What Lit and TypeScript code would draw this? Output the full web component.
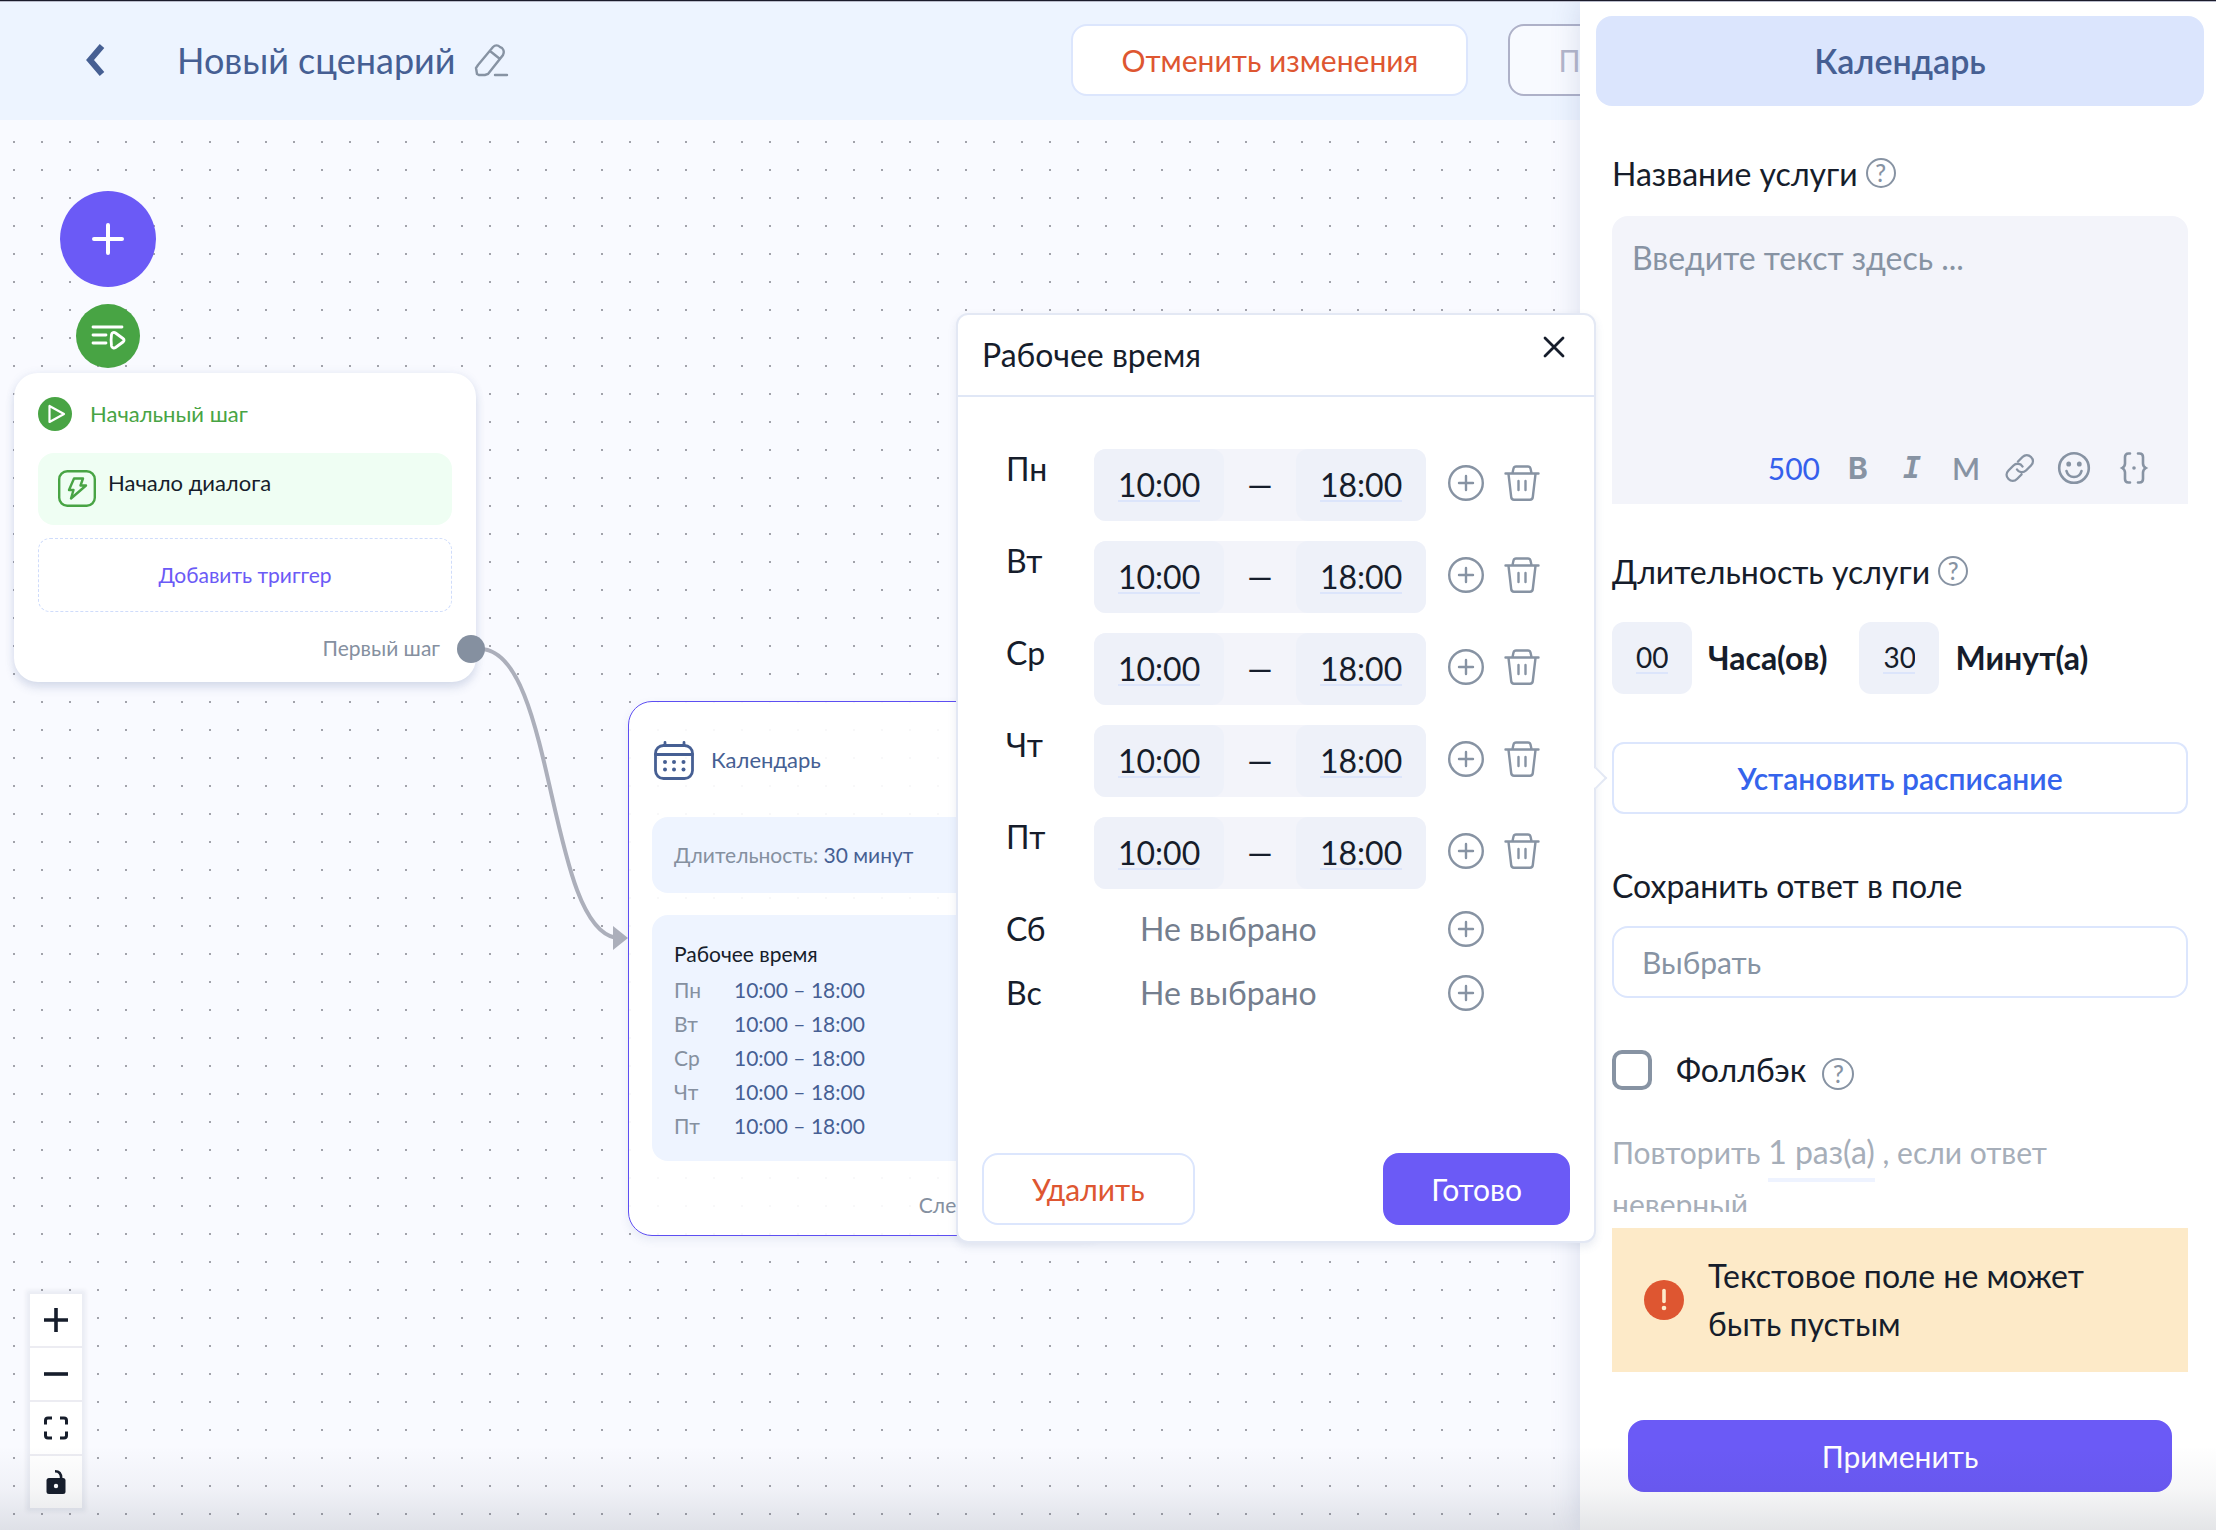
import { LitElement, html, css, svg, nothing } from "lit";
import { customElement, property } from "lit/decorators.js";

type Day = { name: string; from?: string; to?: string };

const DAYS: Day[] = [
  { name: "Пн", from: "10:00", to: "18:00" },
  { name: "Вт", from: "10:00", to: "18:00" },
  { name: "Ср", from: "10:00", to: "18:00" },
  { name: "Чт", from: "10:00", to: "18:00" },
  { name: "Пт", from: "10:00", to: "18:00" },
  { name: "Сб" },
  { name: "Вс" },
];

const icons = {
  back: svg`<path d="M18 3 6 17l12 14" stroke-width="6"/>`,
  pencil: svg`<path d="M3 21 18 3c2-2 5-2 7 0l2 1c2 2 2 5 1 7L13 30l-3 1H4l-2-1-1-6zM15 7l10 8M20 31h12" stroke-linecap="round"/>`,
  plus: svg`<path d="M16 2v28M2 16h28" stroke-width="4" stroke-linecap="round"/>`,
  list: svg`<path d="M2 5h29M2 13h13M2 21h13" stroke-linecap="round"/><path d="M20.500 12.500c.4-2 2.500-2.600 4-1.500l7.500 5.500c1.400 1 1.400 2.500 0 3.500L24.500 25.500c-1.500 1-3.600.5-4-1.500-.5-3.500-.5-8 0-11.500z" stroke-linejoin="round"/>`,
  play: svg`<circle cx="17" cy="17" r="17" fill="#48a444" stroke="none"/><path d="M11.500 9v16L26 17z" stroke="#fff" stroke-width="2.200" stroke-linejoin="round"/>`,
  bolt: svg`<rect x="1.200" y="1.200" width="35.600" height="34.600" rx="8"/><path d="M16 8.500h9l-2.500 7H28L13 28.500l2.500-8.500H11z" stroke-linejoin="round"/>`,
  calendar: svg`<rect x="1.500" y="4.500" width="37" height="33" rx="8"/><path d="M1.500 13.500h37M11 1.500v3M30 1.500v3" stroke-linecap="round"/><g fill="currentColor" stroke="none"><circle cx="11" cy="21" r="2"/><circle cx="20" cy="21" r="2"/><circle cx="29.500" cy="21" r="2"/><circle cx="11" cy="28.500" r="2"/><circle cx="20" cy="28.500" r="2"/><circle cx="29.500" cy="28.500" r="2"/></g>`,
  close: svg`<path d="M2 2 20 20M20 2 2 20" stroke-linecap="round"/>`,
  add: svg`<circle cx="18" cy="18" r="16.800"/><path d="M18 11v14M11 18h14" stroke-linecap="round"/>`,
  trash: svg`<path d="M1.500 8.500h33M8.500 8l1-4.500c.4-1.300 1.300-2 2.500-2h12c1.200 0 2.100.7 2.500 2l1 4.500M4.500 9l2.700 23c.2 1.800 1.200 2.700 2.800 2.700h16c1.600 0 2.600-.9 2.800-2.700L31.500 9M14.500 16v9M21.500 16v9" stroke-linecap="round" stroke-linejoin="round"/>`,
  link: svg`<path d="M14 9.500 18.500 5c2.500-2.500 6-2.500 8.500 0s2.500 6 0 8.500l-5 5c-2.500 2.500-7 2.500-9-1M17.500 22.500 13 27c-2.500 2.500-6 2.500-8.500 0s-2.500-6 0-8.500l5-5c2.500-2.500 7-2.500 9 1" stroke-linecap="round"/>`,
  smile: svg`<circle cx="16" cy="16" r="14.800"/><path d="M8.500 19c1 4 4 6 7.500 6s6.500-2 7.500-6" stroke-linecap="round"/><g fill="currentColor" stroke="none"><ellipse cx="10.700" cy="12" rx="2.400" ry="2.600"/><ellipse cx="21.300" cy="12" rx="2.400" ry="2.600"/></g>`,
  braces: svg`<path d="M10 1.500H8.500C6 1.500 5 3 5 5v6.500c0 2-.8 3.300-2.800 4.500C4.200 17.200 5 18.500 5 20.500V27c0 2 1 3.500 3.500 3.500H10M18 1.500h1.500C22 1.500 23 3 23 5v6.500c0 2 .8 3.300 2.800 4.500-2 1.200-2.800 2.500-2.800 4.500V27c0 2-1 3.500-3.500 3.500H18" stroke-linecap="round"/><circle cx="14" cy="16" r="1.800" fill="currentColor" stroke="none"/>`,
  alert: svg`<circle cx="20" cy="20" r="20" fill="#de5631" stroke="none"/><path d="M20 10.500v11" stroke="#fdebca" stroke-width="3.600" stroke-linecap="round"/><circle cx="20" cy="28" r="2.300" fill="#fdebca" stroke="none"/>`,
  zoomIn: svg`<path d="M12 0v24M0 12h24" stroke-width="3.600"/>`,
  zoomOut: svg`<path d="M0 12h24" stroke-width="3.600"/>`,
  fit: svg`<path d="M1.500 8.500V4.500c0-1.500 1-2.500 2.500-2.500h4M16 2h4c1.500 0 2.500 1 2.500 2.500v4M22.500 15.500v4c0 1.500-1 2.500-2.500 2.500h-4M8 22H4c-1.500 0-2.500-1-2.500-2.500v-4" stroke-width="3"/>`,
  unlock: svg`<rect x="2.500" y="8" width="19" height="16" rx="2.500" fill="currentColor" stroke="none"/><path d="M11 1.300c4 0 6.200 2.700 6.200 7" stroke-width="2.600"/><circle cx="12" cy="16" r="2.200" fill="#fff" stroke="none"/>`,
};

function icon(name: keyof typeof icons, w: number, h: number, stroke = 2.4) {
  return html`<svg width=${w} height=${h} viewBox="0 0 ${w} ${h}" fill="none" stroke="currentColor"
    stroke-width=${stroke} aria-hidden="true">${icons[name]}</svg>`;
}

const base = css`
  *, *::before, *::after { box-sizing: border-box; }
  svg { display: block; flex: none; overflow: visible; }
  h1, h2, h3, p, ul, dl, dd { margin: 0; padding: 0; font: inherit; }
  button, input, textarea, select {
    font: inherit; color: inherit; border: 0; padding: 0; margin: 0;
    background: none; outline: none; border-radius: 0;
  }
  button { cursor: pointer; }
  .btn {
    height: 72px; padding: 0 48px; border-radius: 16px; border: 2px solid #dce6fd;
    background: #fff; font-size: 30px; line-height: 40px; white-space: nowrap;
  }
  .btn.danger { color: #de5631; }
  .btn.primary { padding: 0 46px; background: #6b5af6; border-color: #6b5af6; color: #fff; }
  .icon-btn { display: grid; place-items: center; width: 40px; height: 40px; color: #8793a3; }
`;

@customElement("flow-canvas")
export class FlowCanvas extends LitElement {
  static styles = [base, css`
    :host { display: block; position: relative; overflow: hidden; background: #f9faff; }
    .dots, .edge { position: absolute; inset: 0; width: 100%; height: 100%; }
    .fab {
      position: absolute; display: grid; place-items: center; border-radius: 50%; color: #fff;
    }
    .fab.add { left: 60px; top: 71px; width: 96px; height: 96px; background: #6b5af6; }
    .fab.steps { left: 76px; top: 184px; width: 64px; height: 64px; background: #48a444; }
    .node {
      position: absolute; display: flex; flex-direction: column;
      border-radius: 24px; font-size: 21px; line-height: 32px;
    }
    .node h2, .trigger span { font-size: 22px; }
    .start {
      left: 14px; top: 253px; width: 462px; padding: 24px 24px 20px; background: #fff;
      box-shadow: 0 6px 10px rgba(70, 95, 147, .16), 0 0 10px rgba(70, 95, 147, .08);
    }
    .calendar {
      left: 628px; top: 581px; width: 480px; border: 1px solid #5d4ef2; padding: 22px 23px 16px;
      background: rgba(255, 255, 255, .92); box-shadow: 0 4px 10px rgba(70, 95, 147, .1);
    }
    .head { display: flex; align-items: center; }
    .start .head { gap: 18px; color: #48a444; height: 34px; }
    .calendar .head { gap: 17px; color: #465f93; height: 72px; padding-left: 2px; margin-bottom: 21px; }
    .trigger {
      display: flex; gap: 12px; height: 72px; margin-top: 22px; padding: 17px 20px;
      border-radius: 16px; background: #effef3; color: #48a444;
    }
    .trigger span { color: #161d2b; line-height: 26px; }
    .add-trigger {
      height: 74px; margin-top: 13px; border: 1px dashed #cfdcfb; border-radius: 12px; color: #6b5af6;
    }
    .out {
      display: flex; align-items: center; justify-content: flex-end; color: #8590a0; height: 28px;
    }
    .start .out { margin-top: 22px; padding-right: 12px; }
    .calendar .out { margin-top: 30px; padding-right: 4px; }
    .handle {
      position: absolute; right: -9px; bottom: 19px; width: 28px; height: 28px;
      border-radius: 50%; background: #8590a0;
    }
    .box { border-radius: 16px; padding: 22px; background: #eef4ff; color: #465f93; }
    .box + .box { margin-top: 22px; padding: 20px 22px 18px; }
    .grey { color: #8590a0; }
    .box h3 { color: #161d2b; line-height: 38px; }
    .hours { display: grid; grid-template-columns: 60px 1fr; line-height: 34px; }
    .zoom {
      position: absolute; left: 30px; bottom: 22px; display: grid; gap: 2px; width: 52px;
      background: #ececf2; box-shadow: 0 0 4px 4px rgba(20, 30, 60, .06);
    }
    .zoom button { display: grid; place-items: center; height: 52px; background: #fff; color: #161d2b; }
  `];

  render() {
    return html`
      <svg class="dots" aria-hidden="true">
        <pattern id="dot" x="0" y="8" width="28" height="28" patternUnits="userSpaceOnUse">
          <circle cx="14" cy="14" r="1" fill="#85858f" />
        </pattern>
        <rect width="100%" height="100%" fill="url(#dot)" />
      </svg>
      <svg class="edge" aria-hidden="true">
        <path d="M480 529C555 529 547 806 616 818" fill="none" stroke="#acafbb" stroke-width="4" />
        <path d="M613 806v24l15-12z" fill="#acafbb" />
      </svg>

      <button class="fab add" aria-label="Добавить">${icon("plus", 32, 32)}</button>
      <button class="fab steps" aria-label="Шаги">${icon("list", 34, 28, 2.8)}</button>

      <section class="node start">
        <div class="head">${icon("play", 34, 34)}<h2>Начальный шаг</h2></div>
        <div class="trigger">${icon("bolt", 38, 37)}<span>Начало диалога</span></div>
        <button class="add-trigger">Добавить триггер</button>
        <div class="out">Первый шаг</div>
        <i class="handle"></i>
      </section>

      <section class="node calendar">
        <div class="head">${icon("calendar", 40, 39, 2.8)}<h2>Календарь</h2></div>
        <p class="box"><span class="grey">Длительность:</span> 30 минут</p>
        <div class="box">
          <h3>Рабочее время</h3>
          <dl class="hours">
            ${DAYS.filter((d) => d.from).map((d) => html`
              <dt class="grey">${d.name}</dt><dd>${d.from} – ${d.to}</dd>`)}
          </dl>
        </div>
        <div class="out">Следующий шаг</div>
      </section>

      <div class="zoom">
        <button aria-label="Увеличить">${icon("zoomIn", 24, 24)}</button>
        <button aria-label="Уменьшить">${icon("zoomOut", 24, 24)}</button>
        <button aria-label="По размеру">${icon("fit", 24, 24)}</button>
        <button aria-label="Блокировка">${icon("unlock", 24, 24)}</button>
      </div>
    `;
  }
}

@customElement("hours-popup")
export class HoursPopup extends LitElement {
  @property({ attribute: false }) days: Day[] = DAYS;

  static styles = [base, css`
    :host {
      display: block; width: 640px; border: 2px solid #e3e8f4; border-radius: 12px;
      background: #fff; box-shadow: 0 4px 8px rgba(70, 95, 147, .12);
    }
    .tail {
      position: absolute; right: -10px; top: 455px; width: 16px; height: 16px; rotate: 45deg;
      background: #fff; border: 2px solid #e3e8f4; border-left: 0; border-bottom: 0;
    }
    header {
      display: flex; justify-content: space-between; height: 82px; padding: 12px 20px 0 24px;
      border-bottom: 2px solid #e0e7f6;
    }
    h2 { margin-top: 8px; line-height: 40px; }
    .close { color: #161d2b; }
    .rows { display: grid; gap: 20px; padding: 52px 44px 136px 48px; }
    .row { display: grid; grid-template-columns: 88px 332px 1fr; min-height: 44px; line-height: 40px; }
    .range {
      display: flex; align-items: center; justify-content: space-between; height: 72px;
      border-radius: 12px; background: #f3f4fa;
    }
    .cell {
      display: grid; place-items: center; width: 130px; height: 72px; border-radius: 12px;
      background: #eef1f9;
    }
    .cell input {
      width: 82px; height: 34px; line-height: 32px; text-align: center;
      border-bottom: 2px solid #dce5fb;
    }
    .none { padding-left: 46px; color: #747e8e; }
    .actions { display: flex; gap: 16px; padding-left: 20px; }
    .range + .actions { padding-top: 14px; }
    footer { display: flex; justify-content: space-between; padding: 0 24px 16px; }
  `];

  render() {
    return html`
      <i class="tail"></i>
      <header>
        <h2>Рабочее время</h2>
        <button class="icon-btn close" aria-label="Закрыть">${icon("close", 22, 22, 2.8)}</button>
      </header>
      <div class="rows">
        ${this.days.map((d) => html`
          <div class="row">
            <span>${d.name}</span>
            ${d.from ? html`
              <div class="range">
                <span class="cell"><input aria-label="${d.name}, начало" .value=${d.from} /></span>
                <span>—</span>
                <span class="cell"><input aria-label="${d.name}, конец" .value=${d.to ?? ""} /></span>
              </div>` : html`<span class="none">Не выбрано</span>`}
            <div class="actions">
              <button class="icon-btn" aria-label="Добавить интервал">${icon("add", 36, 36)}</button>
              ${d.from ? html`<button class="icon-btn" aria-label="Удалить интервал">${icon("trash", 36, 36)}</button>` : nothing}
            </div>
          </div>`)}
      </div>
      <footer>
        <button class="btn danger">Удалить</button>
        <button class="btn primary">Готово</button>
      </footer>
    `;
  }
}

@customElement("step-panel")
export class StepPanel extends LitElement {
  static styles = [base, css`
    :host {
      display: flex; flex-direction: column; min-height: 0; background: #fff;
      box-shadow: 0 0 28px rgba(70, 95, 147, .18);
    }
    .title {
      flex: none; margin: 16px 12px 0 16px; height: 90px; display: grid; place-items: center;
      border-radius: 16px; background: #dbe5fd; color: #465f93;
      font-size: 34px; font-weight: 600; line-height: 40px;
    }
    .body {
      flex: 1; min-height: 0; overflow: hidden; display: flex; flex-direction: column;
      padding: 48px 28px 0 32px;
    }
    .label { display: flex; align-items: flex-start; gap: 8px; line-height: 40px; }
    .help {
      flex: none; display: grid; place-items: center; width: 30px; height: 30px; margin-top: 4px;
      border: 2px solid #8793a3; border-radius: 50%; color: #8793a3;
      font-size: 24px; font-weight: 500; line-height: 26px;
    }
    .editor {
      display: flex; flex-direction: column; flex: none; height: 288px; margin: 22px 0 48px;
      border-radius: 16px 16px 0 0; background: #f3f4fa;
    }
    textarea { flex: 1; resize: none; padding: 22px 20px 0; line-height: 40px; }
    ::placeholder { color: #8793a3; opacity: 1; }
    .tools {
      display: flex; align-items: center; justify-content: flex-end; gap: 22px;
      padding: 0 32px 20px 0; height: 52px; color: #8793a3;
    }
    .tools output { color: #3560ec; font-size: 30px; line-height: 32px; }
    .tools button {
      display: grid; place-items: center; width: 32px; height: 32px;
      font: 600 30px/32px Lato, "Liberation Sans", sans-serif;
    }
    .tools .bold { font: 700 30px/32px Inter, "Liberation Sans", sans-serif; }
    .tools .italic { font: italic 700 30px/32px "DejaVu Sans Mono", monospace; }
    .tools .wide { width: 44px; }
    .duration { display: flex; align-items: center; flex: none; margin: 30px 0 48px; font-weight: 700; }
    .duration .cell {
      display: grid; place-items: center; width: 80px; height: 72px; border-radius: 12px;
      background: #eef1f9;
    }
    .duration input {
      width: 32px; height: 32px; font-size: 28px; line-height: 30px; font-weight: 400;
      text-align: center; border-bottom: 2px solid #dce5fb;
    }
    .duration label { padding: 0 32px 0 16px; line-height: 40px; }
    .schedule { flex: none; color: #3564ec; font-weight: 600; margin-bottom: 52px; border-radius: 12px; }
    .body select {
      appearance: none; flex: none; height: 72px; margin: 20px 0 52px; padding: 0 28px;
      border: 2px solid #dce6fd; border-radius: 16px; color: #8793a3; font-size: 30px; background: #fff;
    }
    .check { display: flex; align-items: center; flex: none; height: 40px; }
    .check input {
      appearance: none; width: 40px; height: 40px; border: 4px solid #8793a3; border-radius: 10px;
    }
    .check label { padding: 0 16px 0 24px; line-height: 40px; }
    .check .help { width: 32px; height: 32px; margin-top: 8px; }
    .repeat { margin-top: 36px; font-size: 30px; line-height: 52px; color: #a6aeb9; }
    .repeat button {
      font-size: 32px; line-height: 40px; padding-bottom: 6px; margin-bottom: -8px;
      border-bottom: 4px solid #eef3ff;
    }
    .warning {
      flex: none; display: flex; align-items: center; gap: 24px; margin: 16px 28px 0 32px;
      padding: 24px 32px; background: #fdeac8; line-height: 48px;
    }
    .apply { flex: none; margin: 48px 44px 38px 48px; }
  `];

  render() {
    return html`
      <h2 class="title">Календарь</h2>
      <div class="body">
        <div class="label"><label for="name">Название услуги</label><span class="help">?</span></div>
        <div class="editor">
          <textarea id="name" placeholder="Введите текст здесь ..."></textarea>
          <div class="tools">
            <output>500</output>
            <button class="bold" aria-label="Жирный">B</button>
            <button class="italic" aria-label="Курсив">I</button>
            <button aria-label="Моноширинный">M</button>
            <button aria-label="Ссылка">${icon("link", 32, 32)}</button>
            <button aria-label="Эмодзи">${icon("smile", 32, 32, 2.6)}</button>
            <button class="wide" aria-label="Переменная">${icon("braces", 28, 32, 2.6)}</button>
          </div>
        </div>

        <div class="label"><span>Длительность услуги</span><span class="help">?</span></div>
        <div class="duration">
          <span class="cell"><input id="hours" .value=${"00"} /></span>
          <label for="hours">Часа(ов)</label>
          <span class="cell"><input id="minutes" .value=${"30"} /></span>
          <label for="minutes">Минут(а)</label>
        </div>
        <button class="btn schedule">Установить расписание</button>

        <label class="label" for="field">Сохранить ответ в поле</label>
        <select id="field"><option>Выбрать</option></select>

        <div class="check">
          <input type="checkbox" id="fallback" /><label for="fallback">Фоллбэк</label>
          <span class="help">?</span>
        </div>
        <p class="repeat">
          <span>Повторить</span> <button>1 раз(а)</button> <span>, если ответ</span>
          <span>неверный</span>
        </p>
      </div>
      <div class="warning" role="alert">${icon("alert", 40, 40)}<span>Текстовое поле не может быть пустым</span></div>
      <button class="btn primary apply">Применить</button>
    `;
  }
}

@customElement("app-root")
export class AppRoot extends LitElement {
  static styles = [base, css`
    :host {
      display: grid; grid-template: 120px minmax(0, 1fr) / minmax(0, 1fr) 636px;
      position: relative; height: 100vh; overflow: hidden; color: #161d2b;
      font: 400 32px/40px Lato, "Open Sans", sans-serif;
    }
    :host::before {
      content: ""; position: absolute; inset: 0 0 auto; height: 2px; z-index: 4;
      background: linear-gradient(#1b1b2b 50%, #b9bccb 50%);
    }
    :host::after {
      content: ""; position: absolute; inset: auto 0 0; height: 84px; z-index: 4; pointer-events: none;
      background: linear-gradient(rgba(30, 40, 60, 0), rgba(30, 40, 60, .04) 50%, rgba(30, 40, 60, .12));
    }
    .bar {
      grid-area: 1 / 1 / 2 / 3; display: flex; align-items: center; padding-left: 75px;
      background: #edf4ff; color: #465f93;
    }
    .bar h1 { margin-left: 62px; font-size: 36px; line-height: 44px; }
    .back { color: #465f93; }
    .edit { margin-left: 16px; }
    .actions { display: flex; gap: 40px; margin-left: auto; padding-right: 451px; }
    .btn.ghost { color: #b3b6ca; border-color: #aeb1c8; background: #f8faff; }
    flow-canvas { grid-area: 2 / 1 / 3 / 2; }
    step-panel { grid-area: 1 / 2 / 3 / 3; z-index: 1; }
    hours-popup { position: absolute; right: 620px; top: 313px; z-index: 2; }
  `];

  render() {
    return html`
      <header class="bar">
        <button class="icon-btn back" aria-label="Назад">${icon("back", 22, 34)}</button>
        <h1>Новый сценарий</h1>
        <button class="icon-btn edit" aria-label="Переименовать">${icon("pencil", 33, 33)}</button>
        <div class="actions">
          <button class="btn danger">Отменить изменения</button>
          <button class="btn ghost">Применить</button>
        </div>
      </header>
      <flow-canvas></flow-canvas>
      <step-panel></step-panel>
      <hours-popup .days=${DAYS}></hours-popup>
    `;
  }
}
